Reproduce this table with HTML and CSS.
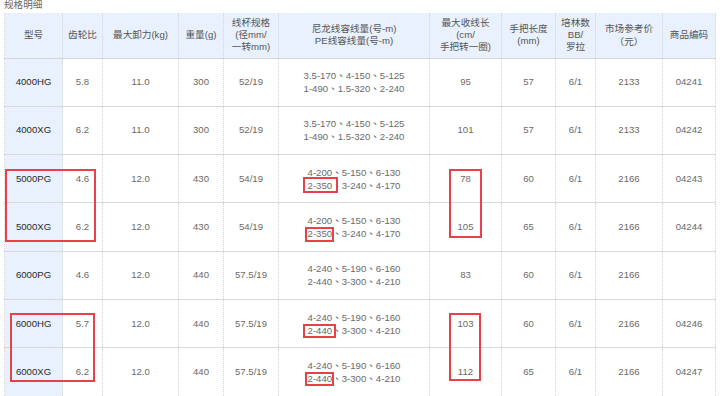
FILE: index.html
```html
<!DOCTYPE html>
<html lang="zh-CN">
<head>
<meta charset="utf-8">
<title>规格明细</title>
<link rel="stylesheet" href="styles.css">
</head>
<body>
<div class="page">
  <div class="title">规格明细</div>
  <table class="spec">
    <colgroup>
      <col class="c1"><col class="c2"><col class="c3"><col class="c4"><col class="c5"><col class="c6"><col class="c7"><col class="c8"><col class="c9"><col class="c10"><col class="c11">
    </colgroup>
    <thead>
      <tr>
        <th>型号</th>
        <th>齿轮比</th>
        <th>最大卸力(kg)</th>
        <th>重量(g)</th>
        <th>线杯规格<br>(径mm/<br>一转mm)</th>
        <th>尼龙线容线量(号-m)<br>PE线容线量(号-m)</th>
        <th>最大收线长<br>(cm/<br>手把转一圈)</th>
        <th>手把长度<br>(mm)</th>
        <th>培林数<br>BB/<br>罗拉</th>
        <th>市场参考价<br><span class="cjk">（元）</span></th>
        <th>商品编码</th>
      </tr>
    </thead>
    <tbody>
      <tr>
        <td class="model">4000HG</td><td>5.8</td><td>11.0</td><td>300</td><td>52/19</td>
        <td>3.5-170<span class="sep">、</span>4-150<span class="sep">、</span>5-125<br>1-490<span class="sep">、</span>1.5-320<span class="sep">、</span>2-240</td>
        <td>95</td><td>57</td><td>6/1</td><td>2133</td><td>04241</td>
      </tr>
      <tr>
        <td class="model">4000XG</td><td>6.2</td><td>11.0</td><td>300</td><td>52/19</td>
        <td>3.5-170<span class="sep">、</span>4-150<span class="sep">、</span>5-125<br>1-490<span class="sep">、</span>1.5-320<span class="sep">、</span>2-240</td>
        <td>101</td><td>57</td><td>6/1</td><td>2133</td><td>04242</td>
      </tr>
      <tr>
        <td class="model">5000PG</td><td>4.6</td><td>12.0</td><td>430</td><td>54/19</td>
        <td>4-200<span class="sep">、</span>5-150<span class="sep">、</span>6-130<br>2-350<span class="sep">、</span>3-240<span class="sep">、</span>4-170</td>
        <td>78</td><td>60</td><td>6/1</td><td>2166</td><td>04243</td>
      </tr>
      <tr>
        <td class="model">5000XG</td><td>6.2</td><td>12.0</td><td>430</td><td>54/19</td>
        <td>4-200<span class="sep">、</span>5-150<span class="sep">、</span>6-130<br>2-350<span class="sep">、</span>3-240<span class="sep">、</span>4-170</td>
        <td>105</td><td>65</td><td>6/1</td><td>2166</td><td>04244</td>
      </tr>
      <tr>
        <td class="model">6000PG</td><td>4.6</td><td>12.0</td><td>440</td><td>57.5/19</td>
        <td>4-240<span class="sep">、</span>5-190<span class="sep">、</span>6-160<br>2-440<span class="sep">、</span>3-300<span class="sep">、</span>4-210</td>
        <td>83</td><td>60</td><td>6/1</td><td>2166</td><td></td>
      </tr>
      <tr>
        <td class="model">6000HG</td><td>5.7</td><td>12.0</td><td>440</td><td>57.5/19</td>
        <td>4-240<span class="sep">、</span>5-190<span class="sep">、</span>6-160<br>2-440<span class="sep">、</span>3-300<span class="sep">、</span>4-210</td>
        <td>103</td><td>60</td><td>6/1</td><td>2166</td><td>04246</td>
      </tr>
      <tr>
        <td class="model">6000XG</td><td>6.2</td><td>12.0</td><td>440</td><td>57.5/19</td>
        <td>4-240<span class="sep">、</span>5-190<span class="sep">、</span>6-160<br>2-440<span class="sep">、</span>3-300<span class="sep">、</span>4-210</td>
        <td>112</td><td>65</td><td>6/1</td><td>2166</td><td>04247</td>
      </tr>
    </tbody>
  </table>

  <div class="mark mark-5000"></div>
  <div class="mark mark-350a"></div>
  <div class="mark mark-350b"></div>
  <div class="mark mark-len5000"></div>
  <div class="mark mark-6000"></div>
  <div class="mark mark-440a"></div>
  <div class="mark mark-440b"></div>
  <div class="mark mark-len6000"></div>
</div>
</body>
</html>
```

FILE: styles.css
```css
html, body {
  margin: 0;
  padding: 0;
  background: #ffffff;
}

.page {
  position: relative;
  width: 720px;
  height: 396px;
  overflow: hidden;
  font-family: "Liberation Sans", "Noto Sans CJK SC", sans-serif;
  font-size: 9.6px;
  color: #6a6a6a;
}

.title {
  height: 12px;
  line-height: 10px;
  padding-left: 4px;
  color: #666666;
}

.spec {
  margin-left: 4px;
  margin-top: 0.5px;
  width: 711px;
  table-layout: fixed;
  border-collapse: collapse;
}

.c1 { width: 58px; }
.c2 { width: 40px; }
.c3 { width: 76px; }
.c4 { width: 45px; }
.c5 { width: 55px; }
.c6 { width: 151px; }
.c7 { width: 72px; }
.c8 { width: 54px; }
.c9 { width: 40px; }
.c10 { width: 67px; }
.c11 { width: 53px; }

.spec th,
.spec td {
  padding: 0 2px;
  text-align: center;
  vertical-align: middle;
  line-height: 12px;
  border-left: 1px dotted #d4d4d4;
  border-right: 1px dotted #d4d4d4;
  white-space: nowrap;
}

.spec th {
  height: 45px;
  font-weight: normal;
  color: #555555;
  background: #e8f1fd;
  border-bottom: 1px solid #d6d6d6;
}

.cjk {
  font-family: "Noto Sans CJK SC", sans-serif;
}

.spec tbody tr {
  height: 48.3px;
  border-top: 1px solid #dadada;
}

.spec td.model {
  background: #e8f1fd;
  color: #2a2a2a;
}

.sep {
  font-family: "Noto Sans CJK TC", sans-serif;
}

.mark {
  position: absolute;
  border: 2px solid #e8414a;
  box-sizing: border-box;
}

.mark-5000 { left: 5px; top: 169px; width: 91px; height: 73px; }
.mark-350a { left: 303px; top: 177px; width: 35px; height: 16px; }
.mark-350b { left: 305px; top: 227px; width: 29px; height: 15px; }
.mark-len5000 { left: 449px; top: 169px; width: 33px; height: 69px; }
.mark-6000 { left: 10px; top: 313px; width: 85px; height: 69px; }
.mark-440a { left: 303px; top: 324px; width: 33px; height: 14px; }
.mark-440b { left: 305px; top: 372px; width: 29px; height: 14px; }
.mark-len6000 { left: 449px; top: 313px; width: 32px; height: 68px; }
```
